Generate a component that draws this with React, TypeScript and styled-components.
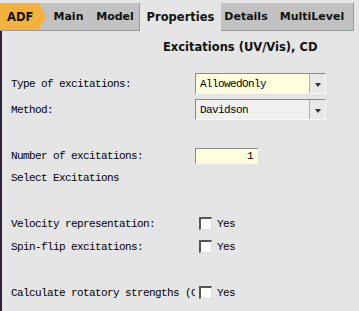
import styled, { createGlobalStyle } from "styled-components";

const GlobalStyle = createGlobalStyle`
  body {
    margin: 0;
    background-color: #e5e5e5;
  }
`;

const App = () => {
  return (
    <>
      <GlobalStyle />
      <Page>
        <TabBar>
          <TabGroup>
            <AdfTab>ADF</AdfTab>
            <Tab width={45}>Main</Tab>
            <Tab width={48}>Model</Tab>
          </TabGroup>
          <ActiveTab>Properties</ActiveTab>
          <TabGroup>
            <Tab width={50}>Details</Tab>
            <Tab width={82}>MultiLevel</Tab>
          </TabGroup>
        </TabBar>
        <Body>
          <Title>Excitations (UV/Vis), CD</Title>
          <Row height={21} top={19}>
            <Label>Type of excitations:</Label>
            <Combo>
              <ComboField bg="#ffffe0">AllowedOnly</ComboField>
              <ComboButton>
                <Arrow />
              </ComboButton>
            </Combo>
          </Row>
          <Row height={21} top={5}>
            <Label>Method:</Label>
            <Combo>
              <ComboField bg="#f0f0f0">Davidson</ComboField>
              <ComboButton>
                <Arrow />
              </ComboButton>
            </Combo>
          </Row>
          <Row height={16} top={28}>
            <Label>Number of excitations:</Label>
            <NumberField>1</NumberField>
          </Row>
          <Row height={14} top={7}>
            <Label>Select Excitations</Label>
          </Row>
          <Row height={15} top={31}>
            <Label>Velocity representation:</Label>
            <Check />
            <CheckText>Yes</CheckText>
          </Row>
          <Row height={15} top={8}>
            <Label>Spin-flip excitations:</Label>
            <Check />
            <CheckText>Yes</CheckText>
          </Row>
          <Row height={15} top={31}>
            <Label>Calculate rotatory strengths (CD)</Label>
            <Check />
            <CheckText>Yes</CheckText>
          </Row>
        </Body>
      </Page>
    </>
  );
};

const Page = styled.div`
  width: 359px;
  height: 311px;
  background-color: #e5e5e5;
  overflow: hidden;
  display: flex;
  flex-direction: column;
`;

const TabBar = styled.div`
  display: flex;
  margin-top: 3px;
  height: 28px;
  font-family: "DejaVu Sans", sans-serif;
  font-weight: bold;
  font-size: 11px;
  color: #111;
`;

const TabGroup = styled.div`
  display: flex;
  align-items: center;
  background-color: #c2c2c2;
  border-bottom: 1px solid #9a9a9a;
  border-right: 1px solid #9a9a9a;
`;

const Tab = styled.div<{ width: number }>`
  width: ${(p) => p.width}px;
  text-align: center;
  white-space: nowrap;
`;

const AdfTab = styled.div`
  display: flex;
  align-items: center;
  align-self: stretch;
  width: 46px;
  padding-left: 7px;
  box-sizing: border-box;
  background-color: #f4b13e;
  font-size: 11.5px;
  clip-path: polygon(0 0, 39px 0, 46px 50%, 39px 100%, 0 100%);
`;

const ActiveTab = styled.div`
  display: flex;
  align-items: center;
  justify-content: center;
  width: 81px;
  font-size: 11.5px;
`;

const Body = styled.div`
  flex: 1;
  border-left: 2px solid #2e2238;
  display: flex;
  flex-direction: column;
  padding-left: 9px;
  font-family: "Liberation Mono", monospace;
  font-size: 11px;
  letter-spacing: -0.6px;
  color: #000;
`;

const Title = styled.div`
  margin-top: 9px;
  padding-left: 152px;
  height: 14px;
  line-height: 14px;
  font-family: "DejaVu Sans", sans-serif;
  font-weight: bold;
  font-size: 11.5px;
  letter-spacing: 0;
  color: #111;
`;

const Row = styled.div<{ height: number; top: number }>`
  display: flex;
  align-items: center;
  height: ${(p) => p.height}px;
  margin-top: ${(p) => p.top}px;
`;

const Label = styled.div`
  width: 184px;
  flex-shrink: 0;
  white-space: nowrap;
  overflow: hidden;
`;

const Combo = styled.div`
  display: flex;
  width: 131px;
  height: 21px;
  box-sizing: border-box;
  border-top: 1px solid #8a8a8a;
  border-left: 1px solid #8a8a8a;
  border-bottom: 1px solid #f8f8f8;
  border-right: 1px solid #f8f8f8;
`;

const ComboField = styled.div<{ bg: string }>`
  flex: 1;
  display: flex;
  align-items: center;
  padding-left: 4px;
  background-color: ${(p) => p.bg};
`;

const ComboButton = styled.div`
  width: 15px;
  display: flex;
  align-items: center;
  justify-content: center;
  background-color: #e8e8e8;
  border-left: 1px solid #b0b0b0;
`;

const Arrow = styled.div`
  width: 0;
  height: 0;
  margin-top: 3px;
  border-left: 3px solid transparent;
  border-right: 3px solid transparent;
  border-top: 4px solid #333;
`;

const NumberField = styled.div`
  width: 63px;
  height: 16px;
  box-sizing: border-box;
  display: flex;
  align-items: center;
  justify-content: flex-end;
  padding-right: 4px;
  background-color: #ffffe0;
  border-top: 1px solid #8a8a8a;
  border-left: 1px solid #8a8a8a;
  border-bottom: 1px solid #f4f4f4;
  border-right: 1px solid #f4f4f4;
`;

const Check = styled.div`
  width: 13px;
  height: 13px;
  margin-left: 4px;
  box-sizing: border-box;
  background-color: #fff;
  border-top: 2px solid #555;
  border-left: 2px solid #555;
  border-bottom: 1px solid #ddd;
  border-right: 1px solid #ddd;
`;

const CheckText = styled.div`
  margin-left: 5px;
`;

export default App;
